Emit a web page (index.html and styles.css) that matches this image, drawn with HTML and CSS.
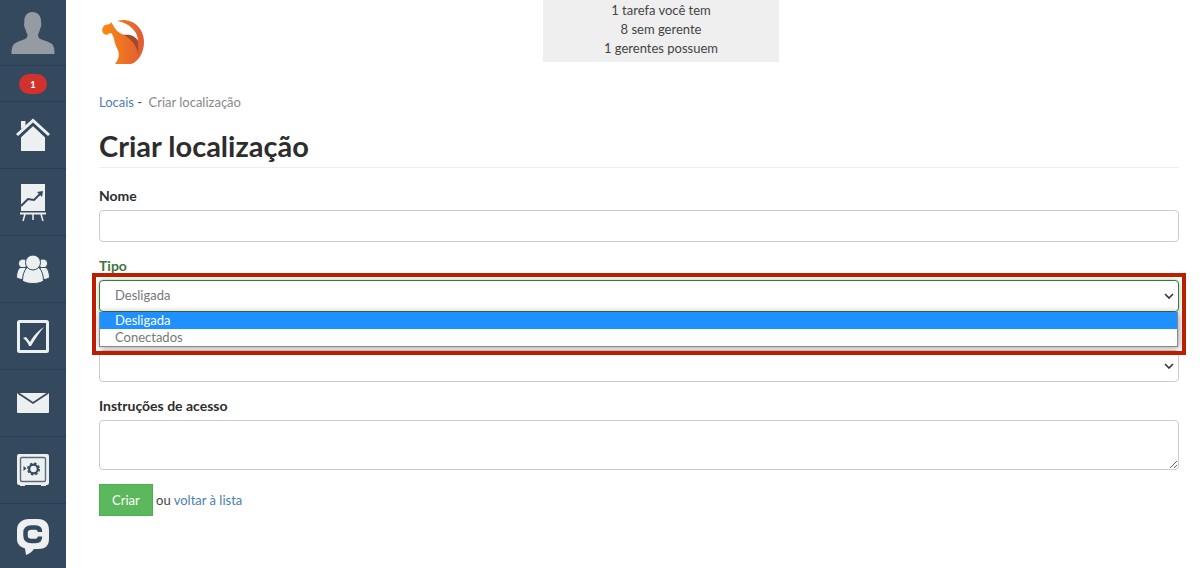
FILE: index.html
```html
<!DOCTYPE html>
<html lang="pt">
  <head>
    <meta charset="UTF-8" />
    <meta name="viewport" content="width=device-width, initial-scale=1.0" />
    <title>Criar localização</title>
    <link rel="stylesheet" href="styles.css">
  </head>
  <body>
    <nav class="sidebar">
      <a href="#" class="side-item side-user" aria-label="Perfil">
        <svg width="44" height="44" viewBox="0 0 44 44" fill="#959ba3">
          <path d="M21 1c6 0 9 4 9 9 0 2 .6 3 .2 5-.3 1.500-1 2-1.400 4-.4 2-1.300 3-1.800 4.500 0 2 .6 3.500 2.500 4.500 4 2 8.500 2.500 11.500 5 2 2 2.500 5 2.500 10H.5c0-5 .6-8 2.500-10 3-2.500 7-3 11-5 2-1 2.500-2.500 2.500-4.500-.8-1.500-1.400-2.500-1.800-4.500-.6-2-1.300-2.500-1.500-4-.3-2 .1-3 .1-5 0-5 3-9 7.700-9z" />
        </svg>
      </a>
      <a href="#" class="side-item side-alert"><span class="badge">1</span></a>
      <a href="#" class="side-item" aria-label="Início">
        <svg width="34" height="34" viewBox="0 0 34 34">
          <path fill="#ecf0f1" d="M5 17.500 17 6l12 11.500V33H5z" />
          <path fill="none" stroke="#34495e" stroke-width="6" d="M2 18 17 4l15 14" />
          <path fill="#ecf0f1" d="M5 11V3h4.500v5z" />
          <path fill="none" stroke="#ecf0f1" stroke-width="3" d="M1 17 17 2.500 33 17" />
        </svg>
      </a>
      <a href="#" class="side-item" aria-label="Relatórios">
        <svg width="34" height="40" viewBox="0 0 34 40">
          <path fill="#ecf0f1" d="M5 2h24v27H5z" />
          <path fill="none" stroke="#34495e" stroke-width="2" d="m5 24 7-7 6 1 7-7" />
          <path fill="#34495e" d="m21 10 6-1-1 6z" />
          <path fill="none" stroke="#ecf0f1" stroke-width="2" d="M4 31.500h26" />
          <path fill="none" stroke="#ecf0f1" stroke-width="1.500" d="m9 32-2 7M17 32v6M25 32l2 7" />
        </svg>
      </a>
      <a href="#" class="side-item" aria-label="Equipe">
        <svg width="34" height="30" viewBox="0 0 34 30" fill="#ecf0f1" stroke="#34495e" stroke-width="1">
          <circle cx="7" cy="9.500" r="4.500" />
          <circle cx="27" cy="9.500" r="4.500" />
          <path d="M4 13.500h6v10l-3 2c-3 0-5-.7-6.500-2 0-4 1-8 3.500-10zM30 13.500h-6v10l3 2c3 0 5-.7 6.500-2 0-4-1-8-3.500-10z" />
          <path d="M11 13.500h12c3 3 4.500 8 4.500 13.500-3 2-7 2.500-10.500 2.500S9.500 29 6.500 27c0-5.500 1.500-10.500 4.500-13.500z" />
          <circle cx="17" cy="8.500" r="7.500" />
        </svg>
      </a>
      <a href="#" class="side-item" aria-label="Tarefas">
        <svg width="34" height="34" viewBox="0 0 34 34">
          <rect x="2.500" y="2.500" width="29" height="30" rx="1" fill="none" stroke="#ecf0f1" stroke-width="3" />
          <path fill="#ecf0f1" d="m7 19 3-1 4 5C18 16 22 12 28 8c-5 6-9 12-13 19h-2c-1-3-3-6-6-8z" />
        </svg>
      </a>
      <a href="#" class="side-item" aria-label="Mensagens">
        <svg width="34" height="22" viewBox="0 0 34 22">
          <rect x="1" y="1" width="32" height="20" rx="1" fill="#ecf0f1" />
          <path fill="none" stroke="#34495e" stroke-width="1.800" d="m2 1 15 10L32 1" />
        </svg>
      </a>
      <a href="#" class="side-item" aria-label="Cofre">
        <svg width="34" height="34" viewBox="0 0 34 34">
          <path fill="#ecf0f1" d="M3 1h28q2 0 2 2v27q0 2-2 2h-1v1h-5v-1H9v1H4v-1H3q-2 0-2-2V3q0-2 2-2z" />
          <rect x="4.500" y="4.500" width="25" height="24" rx="1.500" fill="none" stroke="#5b6c7d" stroke-width="1.400" />
          <path fill="#34495e" d="m7.500 13 3 2.500-3 2.500z" />
          <circle cx="17.500" cy="16" r="4.300" fill="none" stroke="#34495e" stroke-width="2.200" />
          <circle cx="17.500" cy="16" r="5.800" fill="none" stroke="#34495e" stroke-width="1.400" stroke-dasharray="2.500 2.050" />
        </svg>
      </a>
      <a href="#" class="side-item" aria-label="Chat">
        <svg width="34" height="38" viewBox="0 0 34 38">
          <path fill="#ecf0f1" d="M13 1h9c7 0 11 4 11 11v9c0 7-4 10-11 10h-4c-2 3-5 5-8 6l-1-6.500C4 29 1 26 1 21v-9C1 5 6 1 13 1z" />
          <path fill="none" stroke="#34495e" stroke-width="4.500" d="M24 14c0-3-1.500-4.500-4.500-4.500h-4c-4 0-6 2-6 5.500v2.500c0 3.500 2 5.500 6 5.500h4c3 0 4.500-1.500 4.500-4.500" />
        </svg>
      </a>
    </nav>

    <main class="content">
      <header class="top">
        <a href="#" class="logo" aria-label="Página inicial">
          <svg width="46" height="48" viewBox="0 0 46 48">
            <defs>
              <linearGradient id="fur" x1="0" x2="1">
                <stop offset="0" stop-color="#f98a12" />
                <stop offset="1" stop-color="#e05b35" />
              </linearGradient>
            </defs>
            <path fill="#e9eaeb" d="M11 15c2 5 2 9 6 14l2 5c-5-5-8-11-8-19z" />
            <path fill="url(#fur)" d="M16 3C30-1 43 9 43 24c0 11-6 20-13 22H14c4-5 5-10 2-16-3-5-2-11-6-15-2 0-4 3-7 1-3-2-2-7 1-9l5-1 1-2 2 3c2 5 7 9 12 10 5 0 10 2 13 6C37 14 29 5 16 3z" />
            <path fill="#a4482d" d="M23 17c7-1 12 2 14 6l.5 13C35 26 30 21 23 17z" />
          </svg>
        </a>
        <div class="summary">
          <div>1 tarefa você tem</div>
          <div>8 sem gerente</div>
          <div>1 gerentes possuem</div>
        </div>
      </header>

      <div class="breadcrumb">
        <a href="#">Locais</a> - <span class="current">Criar localização</span>
      </div>
      <h1>Criar localização</h1>

      <form>
        <div class="form-group">
          <label for="nome">Nome</label>
          <input type="text" id="nome" class="form-control" />
        </div>

        <div class="form-group has-success">
          <label for="tipo">Tipo</label>
          <div class="select-box">
            <select id="tipo" class="form-control">
              <option>Desligada</option>
              <option>Conectados</option>
            </select>
            <ul class="options">
              <li class="selected">Desligada</li>
              <li>Conectados</li>
            </ul>
            <div class="highlight"></div>
          </div>
        </div>

        <div class="form-group no-label">
          <select class="form-control" aria-label="Local">
            <option></option>
          </select>
        </div>

        <div class="form-group">
          <label for="instrucoes">Instruções de acesso</label>
          <textarea id="instrucoes" class="form-control"></textarea>
        </div>

        <button type="submit" class="btn">Criar</button>
        <span class="or">ou <a href="#">voltar à lista</a></span>
      </form>
    </main>
  </body>
</html>
```

FILE: styles.css
```css
* {
  box-sizing: border-box;
}

body {
  display: flex;
  min-height: 100vh;
  margin: 0;
  font-family: Lato, "Open Sans", sans-serif;
  font-size: 13px;
  line-height: 19px;
  color: #444;
  background-color: #fff;
}

a {
  color: #4a7eb5;
  text-decoration: none;
}

/* sidebar */
.sidebar {
  flex: none;
  width: 66px;
  height: 100vh;
  overflow: hidden;
  background-color: #34495e;
}

.side-item {
  display: flex;
  align-items: center;
  justify-content: center;
  height: 67px;
  border-bottom: 1px solid #2b3e51;
}

.side-user {
  height: 66px;
}

.side-alert {
  height: 36px;
}

.badge {
  width: 28px;
  border-radius: 10px;
  background-color: #d2322d;
  color: #fff;
  font-size: 10px;
  font-weight: bold;
  line-height: 20px;
  text-align: center;
}

/* content */
.content {
  flex: 1;
  padding: 0 21px 0 33px;
}

.top {
  display: grid;
  grid-template-columns: 111fr 59fr 100fr;
  align-items: start;
  height: 93px;
}

.logo {
  padding: 18px 0 0 2px;
}

.summary {
  padding: 1px 0 4px;
  background-color: #efefef;
  text-align: center;
}

.breadcrumb .current {
  margin-left: 3px;
  color: #888;
}

h1 {
  margin: 18px 0;
  padding-bottom: 5px;
  border-bottom: 1px solid #eee;
  color: #2d2d2d;
  font-size: 29px;
  line-height: 32px;
}

/* form */
.form-group {
  margin-bottom: 14px;
}

.form-group label {
  display: block;
  margin-bottom: 5px;
  color: #2d2d2d;
  font-size: 14px;
  font-weight: bold;
}

.no-label {
  padding-top: 24px;
}

.form-control {
  display: block;
  width: 100%;
  height: 32px;
  padding: 0 12px;
  border: 1px solid #ccc;
  border-radius: 4px;
  background-color: #fff;
  color: #777;
  font: inherit;
}

select.form-control {
  padding: 0 24px 1px 15px;
  appearance: none;
  background-image: url("data:image/svg+xml,%3Csvg xmlns='http://www.w3.org/2000/svg' width='10' height='6'%3E%3Cpath d='M1 1l4 4 4-4' fill='none' stroke='%23333' stroke-width='1.6'/%3E%3C/svg%3E");
  background-repeat: no-repeat;
  background-position: right 4px center;
}

textarea.form-control {
  height: 50px;
}

.form-group.has-success label {
  color: #3c763d;
}

.has-success .form-control {
  border-color: #3c763d;
  box-shadow: 0 0 5px #9ccc9c;
}

.select-box {
  position: relative;
}

.options {
  position: absolute;
  z-index: 1;
  top: 100%;
  left: 0;
  right: 1px;
  margin: 0;
  padding: 0;
  border: 1px solid #888;
  border-top: 0;
  background-color: #fff;
  box-shadow: 1px 1px 7px rgba(0, 0, 0, 0.4);
  color: #777;
  line-height: 17px;
  list-style: none;
}

.options li {
  padding-left: 15px;
}

.options .selected {
  background-color: #1e90ff;
  color: #fff;
}

.highlight {
  position: absolute;
  z-index: 2;
  top: -7px;
  left: -7px;
  right: -7px;
  height: 82px;
  border: 4px solid #bb1e00;
  pointer-events: none;
}

.btn {
  height: 32px;
  padding: 0 12px;
  border: 1px solid #4cae4c;
  background-color: #5cb85c;
  color: #fff;
  font: inherit;
}
```
